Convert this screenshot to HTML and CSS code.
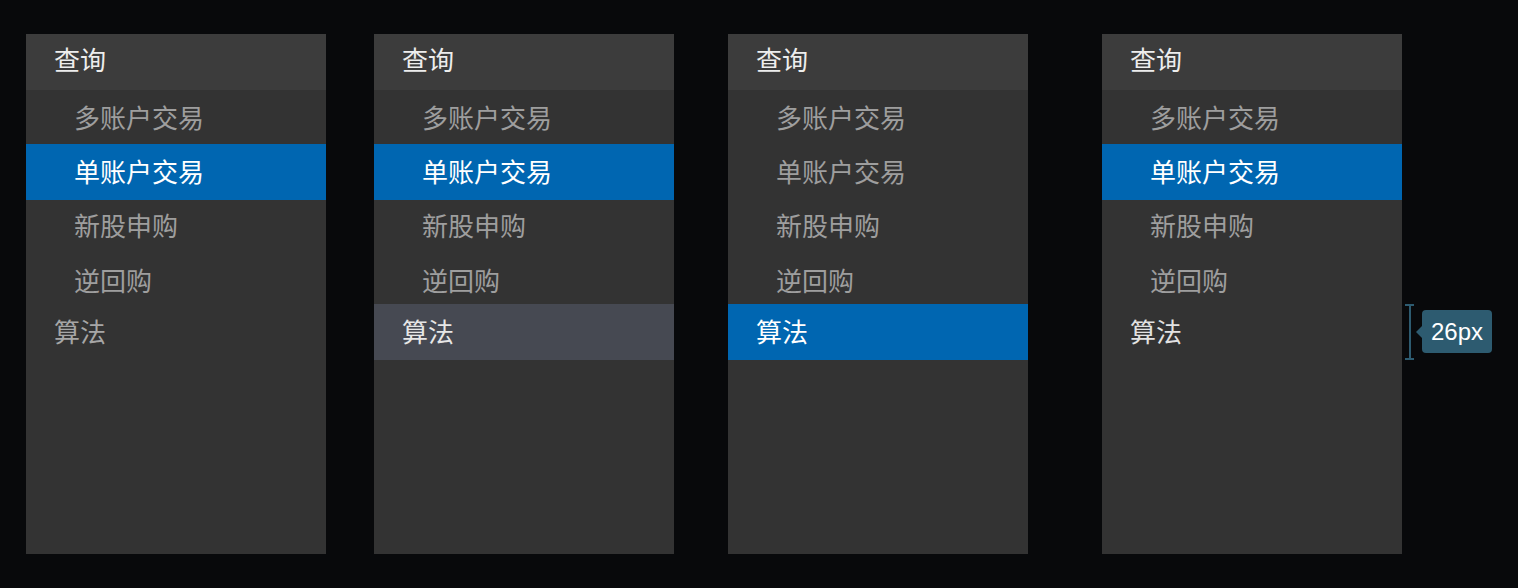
FILE: index.html
```html
<!DOCTYPE html>
<html lang="zh-CN">
<head>
<meta charset="utf-8">
<title>Menu states</title>
<link rel="stylesheet" href="styles.css">
</head>
<body>
<div class="stage">
  <nav class="panel">
    <div class="row group head">查询</div>
    <div class="row sub h54">多账户交易</div>
    <div class="row sub h56 active">单账户交易</div>
    <div class="row sub h52 up">新股申购</div>
    <div class="row sub h52 down">逆回购</div>
    <div class="row group h56 muted">算法</div>
  </nav>
  <nav class="panel gap2">
    <div class="row group head">查询</div>
    <div class="row sub h54">多账户交易</div>
    <div class="row sub h56 active">单账户交易</div>
    <div class="row sub h52 up">新股申购</div>
    <div class="row sub h52 down">逆回购</div>
    <div class="row group h56 hover">算法</div>
  </nav>
  <nav class="panel gap3">
    <div class="row group head">查询</div>
    <div class="row sub h54">多账户交易</div>
    <div class="row sub h56">单账户交易</div>
    <div class="row sub h52 up">新股申购</div>
    <div class="row sub h52 down">逆回购</div>
    <div class="row group h56 active">算法</div>
  </nav>
  <nav class="panel gap4">
    <div class="row group head">查询</div>
    <div class="row sub h54">多账户交易</div>
    <div class="row sub h56 active">单账户交易</div>
    <div class="row sub h52 up">新股申购</div>
    <div class="row sub h52 down">逆回购</div>
    <div class="row group h56">算法</div>
    <div class="bracket"></div>
    <div class="tip">26px</div>
  </nav>
</div>
</body>
</html>
```

FILE: styles.css
```css
html, body {
  margin: 0;
  padding: 0;
  background: #08090b;
}
.stage {
  display: flex;
  align-items: flex-start;
  padding: 34px 0 0 26px;
  font-family: "Noto Sans CJK SC", "Noto Sans", sans-serif;
}
.panel {
  position: relative;
  width: 300px;
  height: 520px;
  background: #333333;
  display: flex;
  flex-direction: column;
}
.gap2 { margin-left: 48px; }
.gap3 { margin-left: 54px; }
.gap4 { margin-left: 74px; }

.row {
  display: flex;
  align-items: center;
  box-sizing: border-box;
  font-size: 26px;
  line-height: 1;
  white-space: nowrap;
  color: #9e9e9e;
}
.group {
  padding-left: 28px;
  color: #e2e2e2;
}
.head {
  height: 56px;
  background: #3c3c3c;
  color: #ededed;
  padding-bottom: 6px;
}
.sub {
  padding-left: 48px;
}
.h52 { height: 52px; }
.h54 { height: 54px; }
.h56 { height: 56px; padding-bottom: 2px; }
.up { padding-bottom: 2px; }
.down { padding-top: 4px; }

.muted { color: #a6a6a6; }
.hover { background: #464952; color: #e6e6e6; }
.active { background: #0066b1; color: #ffffff; }

.bracket {
  position: absolute;
  left: 303px;
  top: 270px;
  width: 9px;
  height: 56px;
  box-sizing: border-box;
  border-top: 2px solid #2d5b70;
  border-bottom: 2px solid #2d5b70;
  background: linear-gradient(#2d5b70, #2d5b70) center / 2px 100% no-repeat;
}
.tip {
  position: absolute;
  left: 320px;
  top: 276px;
  width: 70px;
  height: 43px;
  box-sizing: border-box;
  border-radius: 4px;
  background: #2d5b70;
  color: #ffffff;
  font-family: "Liberation Sans", Arial, sans-serif;
  font-size: 24px;
  display: flex;
  align-items: center;
  justify-content: center;
}
.tip::before {
  content: "";
  position: absolute;
  left: -6px;
  top: 50%;
  margin-top: -6px;
  border-top: 6px solid transparent;
  border-bottom: 6px solid transparent;
  border-right: 6px solid #2d5b70;
}
```
